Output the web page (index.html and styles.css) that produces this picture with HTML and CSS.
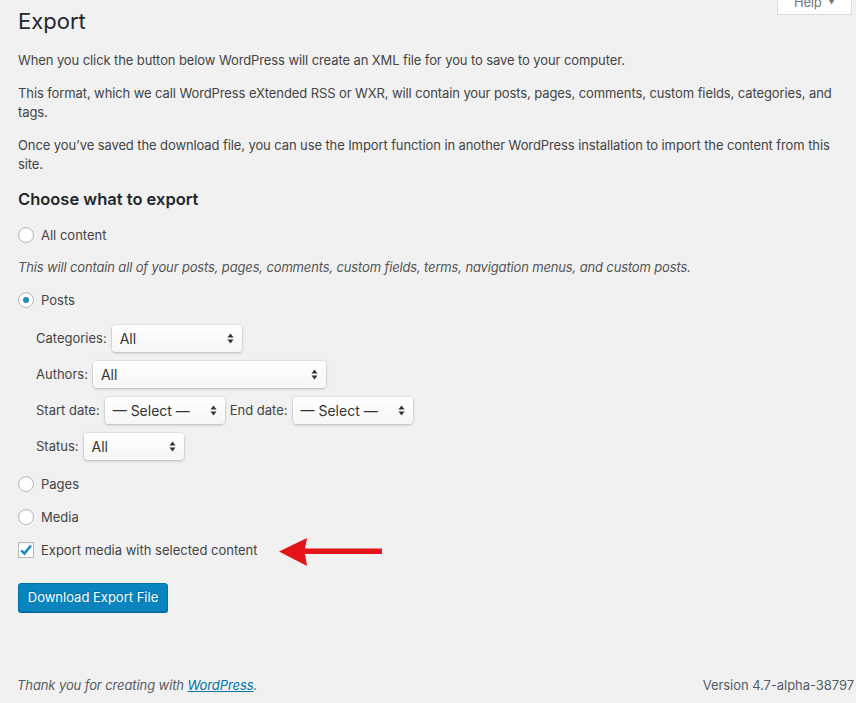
FILE: index.html
```html
<!DOCTYPE html>
<html lang="en">
<head>
<meta charset="utf-8">
<title>Export</title>
<link rel="stylesheet" href="styles.css">
</head>
<body>
<div class="page">
  <div class="header">
    <h1 class="title">Export</h1>
    <div class="help-tab">Help <span class="caret">▼</span></div>
  </div>

  <p class="text first">When you click the button below WordPress will create an XML file for you to save to your computer.</p>
  <p class="text">This format, which we call WordPress eXtended RSS or WXR, will contain your posts, pages, comments, custom fields, categories, and tags.</p>
  <p class="text">Once you’ve saved the download file, you can use the Import function in another WordPress installation to import the content from this site.</p>

  <h2 class="subtitle">Choose what to export</h2>

  <div class="options">
    <label class="option"><span class="radio"></span>All content</label>
    <p class="description">This will contain all of your posts, pages, comments, custom fields, terms, navigation menus, and custom posts.</p>
    <label class="option"><span class="radio checked"></span>Posts</label>

    <div class="filters">
      <div class="filter-row">
        <span class="filter-label">Categories:</span>
        <span class="select w-cat"><span class="select-text">All</span><svg class="updown" width="7" height="11" viewBox="0 0 7 11"><path d="M3.5 0.5 L6.5 4.5 L0.5 4.5 Z M3.5 10.5 L6.5 6.5 L0.5 6.5 Z" fill="#333"/></svg></span>
      </div>
      <div class="filter-row">
        <span class="filter-label">Authors:</span>
        <span class="select w-auth"><span class="select-text">All</span><svg class="updown" width="7" height="11" viewBox="0 0 7 11"><path d="M3.5 0.5 L6.5 4.5 L0.5 4.5 Z M3.5 10.5 L6.5 6.5 L0.5 6.5 Z" fill="#333"/></svg></span>
      </div>
      <div class="filter-row">
        <span class="filter-label">Start date:</span>
        <span class="select w-date"><span class="select-text">— Select —</span><svg class="updown" width="7" height="11" viewBox="0 0 7 11"><path d="M3.5 0.5 L6.5 4.5 L0.5 4.5 Z M3.5 10.5 L6.5 6.5 L0.5 6.5 Z" fill="#333"/></svg></span>
        <span class="filter-label">End date:</span>
        <span class="select w-date"><span class="select-text">— Select —</span><svg class="updown" width="7" height="11" viewBox="0 0 7 11"><path d="M3.5 0.5 L6.5 4.5 L0.5 4.5 Z M3.5 10.5 L6.5 6.5 L0.5 6.5 Z" fill="#333"/></svg></span>
      </div>
      <div class="filter-row">
        <span class="filter-label">Status:</span>
        <span class="select w-status"><span class="select-text">All</span><svg class="updown" width="7" height="11" viewBox="0 0 7 11"><path d="M3.5 0.5 L6.5 4.5 L0.5 4.5 Z M3.5 10.5 L6.5 6.5 L0.5 6.5 Z" fill="#333"/></svg></span>
      </div>
    </div>

    <label class="option"><span class="radio"></span>Pages</label>
    <label class="option"><span class="radio"></span>Media</label>
    <div class="option-wrap">
      <label class="option"><span class="checkbox"><svg width="14" height="14" viewBox="0 0 14 14"><path d="M2.2 7.4 L5.4 10.6 L11.9 2.6" fill="none" stroke="#1e8cbe" stroke-width="2.6" stroke-linejoin="miter"/></svg></span>Export media with selected content</label>
      <svg class="annot-arrow" width="106" height="32" viewBox="0 0 106 32"><path d="M0 16.5 L28 3 L26 13.5 L103 13.5 L103 19 L26 19 L28 31 Z" fill="#e5141b"/></svg>
    </div>
  </div>

  <div class="actions">
    <button class="button-primary" type="button">Download Export File</button>
  </div>

  <div class="footer">
    <span class="thanks">Thank you for creating with <a href="#" class="wp-link">WordPress</a>.</span>
    <span class="version">Version 4.7-alpha-38797</span>
  </div>
</div>
</body>
</html>
```

FILE: styles.css
```css
html, body {
  margin: 0;
  padding: 0;
  background: #f1f1f1;
}
body {
  font-family: Inter, "Liberation Sans", sans-serif;
  font-size: 13px;
  color: #444;
  overflow: hidden;
}
.page {
  display: flex;
  flex-direction: column;
  height: 703px;
  padding: 0 0 0 18px;
  box-sizing: border-box;
}
.header {
  display: flex;
  justify-content: space-between;
  align-items: flex-start;
}
.title {
  margin: 9px 0 0;
  font-size: 22px;
  font-weight: 400;
  line-height: 25px;
  color: #23282d;
}
.help-tab {
  margin-top: -10px;
  margin-right: 4px;
  width: 75px;
  height: 25px;
  box-sizing: border-box;
  background: #fff;
  border: 1px solid #ddd;
  border-top: none;
  color: #72777c;
  font-size: 13px;
  line-height: 22px;
  padding-left: 16px;
  padding-top: 1px;
  letter-spacing: -0.2px;
}
.help-tab .caret {
  font-size: 7px;
  margin-left: 3px;
  vertical-align: 2px;
  color: #72777c;
}
.text {
  margin: 13px 0 0;
  line-height: 19.5px;
  padding-right: 16px;
  letter-spacing: -0.1px;
}
.text.first {
  margin-top: 17px;
}
.subtitle {
  margin: 13px 0 0;
  font-size: 16.5px;
  line-height: 22px;
  font-weight: 600;
  color: #23282d;
}
.options {
  display: flex;
  flex-direction: column;
  margin-top: 15px;
}
.option {
  display: flex;
  align-items: center;
  height: 20px;
  color: #444;
}
.radio {
  width: 16px;
  height: 16px;
  box-sizing: border-box;
  border: 1px solid #b4b9be;
  border-radius: 50%;
  background: #fff;
  box-shadow: inset 0 1px 2px rgba(0,0,0,0.07);
  margin-right: 7px;
  display: flex;
  align-items: center;
  justify-content: center;
}
.radio.checked::before {
  content: "";
  width: 6px;
  height: 6px;
  border-radius: 50%;
  background: #1e8cbe;
}
.checkbox {
  width: 16px;
  height: 16px;
  box-sizing: border-box;
  border: 1px solid #b4b9be;
  background: #fff;
  box-shadow: inset 0 1px 2px rgba(0,0,0,0.07);
  margin-right: 7px;
  display: flex;
  align-items: center;
  justify-content: center;
}
.description {
  margin: 12px 0 13px;
  line-height: 20px;
  font-style: italic;
  color: #555;
  letter-spacing: -0.15px;
}
.filters {
  display: flex;
  flex-direction: column;
  gap: 9px;
  margin: 15px 0 0 18px;
}
.filter-row {
  display: flex;
  align-items: center;
  height: 27px;
}
.filter-label {
  margin-right: 5px;
}
.select {
  display: flex;
  align-items: center;
  justify-content: space-between;
  height: 27px;
  box-sizing: border-box;
  padding: 0 8px 0 8px;
  border-radius: 4px;
  background: linear-gradient(#ffffff, #f6f6f6);
  box-shadow: 0 0 0 1px rgba(0,0,0,0.04), 0 1px 3px rgba(0,0,0,0.22);
  color: #333;
  font-size: 14px;
  margin-right: 5px;
}
.w-cat { width: 130px; }
.w-auth { width: 233px; }
.w-date { width: 120px; }
.w-status { width: 100px; }
.filters + .option {
  margin-top: 14px;
}
.options > .option + .option,
.options > .option + .option-wrap {
  margin-top: 13px;
}
.option-wrap {
  display: flex;
  align-items: center;
  height: 20px;
}
.annot-arrow {
  flex: none;
  margin-left: 21px;
  margin-top: 2px;
}
.actions {
  margin-top: 23px;
}
.button-primary {
  font-family: Inter, "Liberation Sans", sans-serif;
  font-size: 13px;
  color: #fff;
  background: #0a84bd;
  border: 1px solid #0073aa;
  border-radius: 3px;
  box-shadow: 0 1px 0 #006799;
  height: 29px;
  width: 150px;
  padding: 0;
  text-shadow: 0 -1px 1px #006799;
}
.footer {
  margin-top: auto;
  display: flex;
  justify-content: space-between;
  padding: 0 2px 8px 0;
  margin-left: -1px;
  line-height: 20px;
  font-size: 13px;
  color: #555d66;
}
.thanks {
  font-style: italic;
  letter-spacing: -0.1px;
}
.version {
  letter-spacing: -0.05px;
}
.wp-link {
  color: #0073aa;
}
```
